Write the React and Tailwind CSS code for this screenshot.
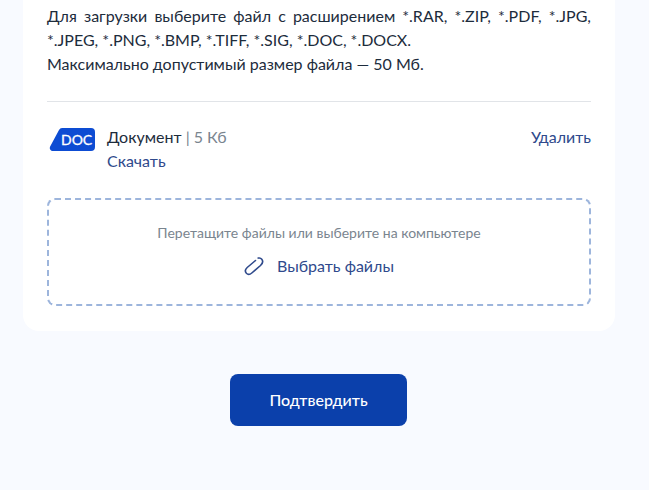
export default function App() {
  return (
    <div className="h-[490px] w-[649px] overflow-hidden bg-[#f8faff] pl-[23px] pr-[34px] font-['Lato',sans-serif] text-[16px] leading-6 text-[#1d2c3c]">
      <div className="h-[331px] rounded-b-2xl bg-white px-6 pt-[4px]">
        <p className="[text-align:justify]">
          Для загрузки выберите файл с расширением *.RAR, *.ZIP, *.PDF, *.JPG, *.JPEG, *.PNG, *.BMP, *.TIFF, *.SIG, *.DOC, *.DOCX.
          <br />
          Максимально допустимый размер файла — 50 Мб.
        </p>
        <div className="mt-[25px] h-px bg-[#e1e4e8]" />
        <div className="mt-[23px] flex items-start justify-between">
          <div className="flex items-start">
            <svg className="mt-[3px] mr-3 shrink-0" width="48" height="24" viewBox="0 0 48 24">
              <path d="M15 0H44a4 4 0 0 1 4 4V19a4 4 0 0 1-4 4H6a3 3 0 0 1-3-4.2L12 2a4 4 0 0 1 3-2Z" fill="#0d4cd3" />
              <text x="14" y="17" fontFamily="Lato, sans-serif" fontSize="14" fontWeight="400" stroke="#fff" strokeWidth="0.3" fill="#fff">DOC</text>
            </svg>
            <div>
              <div>
                Документ <span className="text-[#7a858f]">| 5 Кб</span>
              </div>
              <a className="text-[#2f4a8c]">Скачать</a>
            </div>
          </div>
          <a className="text-[#2f4a8c]">Удалить</a>
        </div>
        <div className="mt-[25px] flex h-[108px] flex-col items-center rounded-lg border-2 border-dashed border-[#9db5dc] pt-[23px]">
          <div className="text-[14px] leading-5 text-[#7a858f]">Перетащите файлы или выберите на компьютере</div>
          <div className="mt-[11px] flex items-center text-[#2f4a8c]">
            <svg className="mr-[13px]" width="20" height="20" viewBox="0 0 20 20" fill="none" stroke="#2f4a8c" strokeWidth="1.6" strokeLinecap="round" strokeLinejoin="round">
              <path d="M11.5 4.5 3.2 11.5c-2 1.8-2.2 4.2-.8 5.8 1.4 1.5 3.6 1.3 5.4-.3l8.7-7.5c2.2-2 2.6-4.5 1.3-6.2-.9-1.2-2.2-1.6-3.6-1.2" />
            </svg>
            <span>Выбрать файлы</span>
          </div>
        </div>
      </div>
      <div className="mt-[43px] flex justify-center pr-[1px]">
        <button className="h-[52px] w-[177px] rounded-lg bg-[#0b40ab] font-medium text-white">Подтвердить</button>
      </div>
    </div>
  );
}
